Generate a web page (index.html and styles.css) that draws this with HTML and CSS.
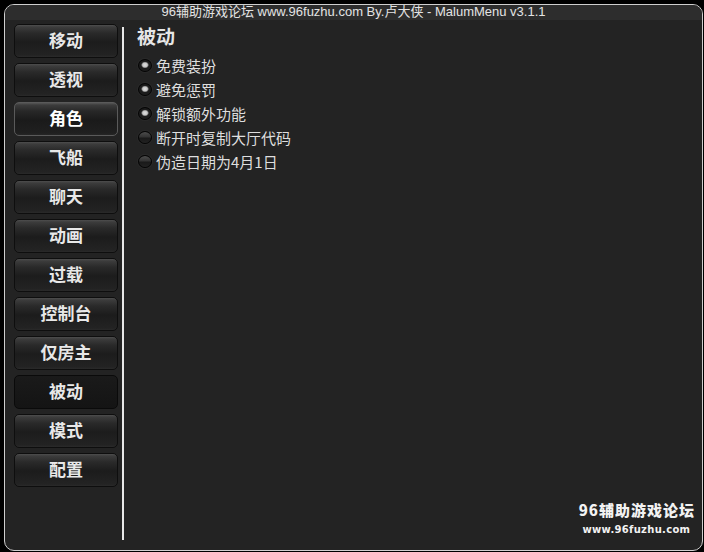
FILE: index.html
```html
<!DOCTYPE html>
<html>
<head>
<meta charset="utf-8">
<link rel="stylesheet" href="styles.css">
</head>
<body>
<div class="window">
  <div class="titlebar">96辅助游戏论坛 www.96fuzhu.com By.卢大侠 - MalumMenu v3.1.1</div>
  <div class="main">
    <div class="sidebar">
      <div class="btn">移动</div>
      <div class="btn">透视</div>
      <div class="btn hover">角色</div>
      <div class="btn">飞船</div>
      <div class="btn">聊天</div>
      <div class="btn">动画</div>
      <div class="btn">过载</div>
      <div class="btn">控制台</div>
      <div class="btn">仅房主</div>
      <div class="btn active">被动</div>
      <div class="btn">模式</div>
      <div class="btn">配置</div>
    </div>
    <div class="divider"></div>
    <div class="content">
      <div class="heading">被动</div>
      <div class="opt"><span class="radio on"></span>免费装扮</div>
      <div class="opt"><span class="radio on"></span>避免惩罚</div>
      <div class="opt"><span class="radio on"></span>解锁额外功能</div>
      <div class="opt"><span class="radio"></span>断开时复制大厅代码</div>
      <div class="opt"><span class="radio"></span>伪造日期为4月1日</div>
    </div>
  </div>
  <div class="watermark">
    <div class="wm1">96辅助游戏论坛</div>
    <div class="wm2">www.96fuzhu.com</div>
  </div>
</div>
</body>
</html>
```

FILE: styles.css
```css
html, body {
  margin: 0;
  padding: 0;
  background: #000;
  width: 704px;
  height: 552px;
  overflow: hidden;
  font-family: "Liberation Sans", "Noto Sans CJK SC", sans-serif;
}
.window {
  position: relative;
  box-sizing: border-box;
  margin: 4px 0 0 4px;
  width: 699px;
  height: 547px;
  border: 1px solid #cfcfcf;
  border-radius: 10px;
  background: #232323;
  overflow: hidden;
}
.titlebar {
  height: 15px;
  background: #2d2d2d;
  color: #e4e4e4;
  font-size: 13px;
  line-height: 14px;
  text-align: center;
  white-space: nowrap;
}
.main {
  display: flex;
  height: 530px;
}
.sidebar {
  display: flex;
  flex-direction: column;
  gap: 5px;
  padding: 4px 0 0 9px;
  width: 104px;
}
.btn {
  box-sizing: border-box;
  width: 104px;
  height: 34px;
  border: 1px solid #0e0e0e;
  border-radius: 5px;
  background: linear-gradient(#4e4e4e 0px, #3c3c3c 2px, #2a2a2a 8px, #1c1c1c 17px, #232323 30px, #2a2a2a 100%);
  color: #e8e8e8;
  font-family: "Noto Sans CJK SC", sans-serif;
  font-weight: bold;
  font-size: 17px;
  line-height: 29px;
  text-align: center;
}
.btn.hover {
  border-color: #5a5a5a;
  background: linear-gradient(#555 0px, #3c3c3c 2px, #282828 8px, #1a1a1a 17px, #202020 30px, #262626 100%);
  color: #fff;
}
.btn.active {
  background: linear-gradient(#1a1a1a, #141414);
  border-color: #0a0a0a;
}
.divider {
  width: 2px;
  background: #e8e8e8;
  margin: 7px 0 10px 4px;
}
.content {
  padding: 4px 0 0 13px;
  color: #dedede;
  font-family: "Noto Sans CJK SC", sans-serif;
}
.heading {
  font-weight: bold;
  font-size: 19px;
  line-height: 24px;
  margin-bottom: 6px;
  color: #e6e6e6;
}
.opt {
  display: flex;
  align-items: center;
  height: 24px;
  font-size: 15px;
  line-height: 24px;
}
.radio {
  box-sizing: border-box;
  width: 14px;
  height: 13px;
  border-radius: 50%;
  border: 1px solid #050505;
  background: linear-gradient(#4c4c4c, #333 45%, #1a1a1a 55%, #222);
  box-shadow: 0 0 0 1px #2a2a2a;
  margin-left: 1px;
  margin-right: 4px;
  position: relative;
  top: -1px;
}
.radio.on {
  background: radial-gradient(ellipse 4px 3.5px at 50% 45%, #e0e0e0 0, #c4c4c4 60%, #1c1c1c 100%);
  background-color: #1a1a1a;
}
.watermark {
  position: absolute;
  right: 8px;
  bottom: 14px;
  text-align: center;
  color: #f2f2f2;
  font-family: "Noto Sans CJK SC", sans-serif;
  font-weight: 900;
}
.wm1 {
  font-size: 15px;
  line-height: 18px;
  letter-spacing: 1px;
  margin-right: -1px;
}
.wm2 {
  font-family: "DejaVu Sans", sans-serif;
  font-weight: bold;
  font-size: 10px;
  line-height: 12px;
  margin-top: 5px;
  letter-spacing: 0.3px;
}
```
